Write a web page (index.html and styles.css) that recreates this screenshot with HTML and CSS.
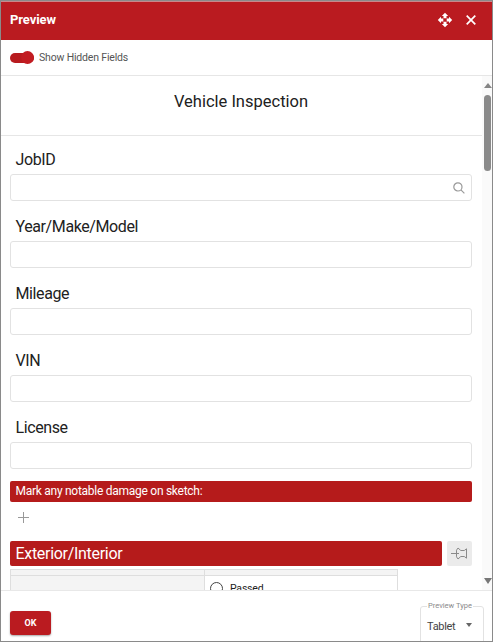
FILE: index.html
```html
<!DOCTYPE html>
<html lang="en">
<head>
    <meta charset="utf-8">
    <title>Preview</title>
    <link rel="stylesheet" href="styles.css">
</head>
<body>
    <div class="dialog">
        <!-- title bar -->
        <div class="dialog-header">
            <h1>Preview</h1>
            <svg class="icon-move" width="16" height="16" viewBox="0 0 16 16">
                <path d="M8 .8 11.200 4H9.500v2.300h-3V4H4.800zM8 15.200 11.200 12H9.500V9.700h-3V12H4.800zM.8 8 4 4.800v1.700h2.300v3H4v1.700zM15.200 8 12 4.800v1.700H9.700v3H12v1.700z"/>
            </svg>
            <svg class="icon-close" width="10" height="10" viewBox="0 0 10 10">
                <path d="M.7.7l8.6 8.6M9.3.7L.7 9.3"/>
            </svg>
        </div>

        <!-- hidden fields switch -->
        <div class="toolbar">
            <span class="switch"></span>
            <span class="switch-label">Show Hidden Fields</span>
        </div>

        <div class="dialog-body">
            <div class="form">
                <div class="form-title">Vehicle Inspection</div>

                <div class="field">
                    <label>JobID</label>
                    <div class="input">
                        <svg class="icon-search" width="12" height="12" viewBox="0 0 12 12">
                            <circle cx="4.9" cy="4.9" r="4.1"/>
                            <path d="M7.9 7.9l3.5 3.5"/>
                        </svg>
                    </div>
                </div>
                <div class="field">
                    <label>Year/Make/Model</label>
                    <div class="input"></div>
                </div>
                <div class="field">
                    <label>Mileage</label>
                    <div class="input"></div>
                </div>
                <div class="field">
                    <label>VIN</label>
                    <div class="input"></div>
                </div>
                <div class="field">
                    <label>License</label>
                    <div class="input"></div>
                </div>

                <div class="banner">Mark any notable damage on sketch:</div>
                <div class="add">
                    <svg width="11" height="11" viewBox="0 0 11 11">
                        <path d="M5.5 0v11M0 5.5h11"/>
                    </svg>
                </div>

                <div class="section">
                    <div class="section-title">Exterior/Interior</div>
                    <div class="pin">
                        <svg width="17" height="13" viewBox="0 0 17 13">
                            <path d="M0 6.500h8M5.500 6.500V3.200L7 1l2.800 2.500h3.500l2.200-1.700v9.400l-2.200-1.700H9.800L7 12 5.500 9.800z"/>
                        </svg>
                    </div>
                </div>

                <div class="grid">
                    <div class="cell head"></div>
                    <div class="cell head"></div>
                    <div class="cell side"></div>
                    <div class="cell option">
                        <span class="radio"></span>
                        <span>Passed</span>
                    </div>
                </div>
            </div>

            <!-- scrollbar -->
            <div class="scrollbar">
                <span class="arrow-up"></span>
                <span class="thumb"></span>
                <span class="arrow-down"></span>
            </div>
        </div>

        <!-- footer -->
        <div class="dialog-footer">
            <div class="btn-ok">OK</div>
            <fieldset class="select">
                <legend>Preview Type</legend>
                <span>Tablet</span>
                <span class="caret"></span>
            </fieldset>
        </div>
    </div>
</body>
</html>
```
FILE: styles.css
```css
* {
    box-sizing: border-box;
    margin: 0;
    padding: 0;
}
body {
    width: 493px;
    height: 642px;
    overflow: hidden;
    background-color: #fff;
    font-family: Roboto, "Liberation Sans", sans-serif;
    color: #212121;
}
.dialog {
    display: flex;
    flex-direction: column;
    width: 493px;
    height: 642px;
    border: 1px solid #8a8a8a;
}

/* title bar */
.dialog-header {
    display: flex;
    align-items: center;
    height: 39px;
    padding: 0 16px 2px 9px;
    border-top: 1px solid #c9888b;
    background-color: #ba1b20;
    color: #fff;
}
.dialog-header h1 {
    flex: 1;
    font-size: 13px;
    letter-spacing: -0.1px;
    line-height: 18px;
}
.icon-move {
    margin-right: 13px;
    fill: #fff;
}
.icon-close {
    fill: none;
    stroke: #fff;
    stroke-width: 1.7;
}

/* hidden fields switch */
.toolbar {
    display: flex;
    align-items: center;
    height: 36px;
    padding-left: 9px;
    border-bottom: 1px solid #e6e6e6;
}
.switch {
    display: flex;
    align-items: center;
    justify-content: flex-end;
    width: 24px;
    height: 10px;
    margin-right: 5px;
    border-radius: 5px;
    background-color: #b81b1f;
}
.switch::after {
    content: "";
    flex: none;
    width: 13px;
    height: 13px;
    border-radius: 50%;
    background-color: #c21c22;
}
.switch-label {
    font-size: 10.5px;
    letter-spacing: -0.17px;
    color: #555;
}

/* scrolling form */
.dialog-body {
    display: flex;
    height: 514px;
    overflow: hidden;
}
.form {
    flex: 1;
}
.form-title {
    height: 60px;
    padding: 14px 1px 0 0;
    border-bottom: 1px solid #e6e6e6;
    font-size: 16.5px;
    line-height: 23px;
    text-align: center;
}
.field {
    height: 67px;
    padding: 13px 10px 0 9px;
}
.field label {
    display: block;
    height: 25px;
    padding-left: 5.5px;
    font-size: 16px;
    letter-spacing: -0.4px;
    line-height: 21px;
}
.input {
    display: flex;
    align-items: center;
    justify-content: flex-end;
    height: 27px;
    padding-right: 6px;
    border: 1px solid #e2e2e2;
    border-radius: 3px;
}
.icon-search {
    fill: none;
    stroke: #999;
    stroke-width: 1.2;
}
.banner {
    height: 21px;
    margin: 10px 10px 0 9px;
    padding-left: 5.5px;
    border-radius: 2px;
    background-color: #b51b1b;
    color: #fff;
    font-size: 12px;
    letter-spacing: -0.27px;
    line-height: 21px;
}
.add {
    height: 39px;
    padding: 10px 0 0 17px;
}
.add svg {
    display: block;
    fill: none;
    stroke: #999;
    stroke-width: 1;
}
.section {
    display: flex;
    gap: 5px;
    height: 25px;
    margin: 0 10px 0 9px;
}
.section-title {
    flex: 1;
    padding-left: 5.5px;
    border-radius: 2px;
    background-color: #b51b1b;
    color: #fff;
    font-size: 16px;
    letter-spacing: -0.3px;
    line-height: 25px;
}
.pin {
    display: flex;
    align-items: center;
    justify-content: center;
    width: 25px;
    border-radius: 2px;
    background-color: #ebebeb;
}
.pin svg {
    fill: none;
    stroke: #8a8a8a;
    stroke-width: 1;
}
.grid {
    display: grid;
    grid-template-columns: 194px 193px;
    grid-template-rows: 6px 40px;
    width: 388px;
    margin: 3px 0 0 9px;
    border-top: 1px solid #dedede;
    border-left: 1px solid #dedede;
}
.cell {
    border-right: 1px solid #dedede;
    border-bottom: 1px solid #dedede;
}
.head,
.side {
    background-color: #f4f4f4;
}
.option {
    display: flex;
    gap: 7px;
    padding: 6px 0 0 5px;
    font-size: 10.5px;
    letter-spacing: -0.2px;
    line-height: 13px;
}
.radio {
    width: 13px;
    height: 13px;
    border: 1px solid #444;
    border-radius: 50%;
}

/* scrollbar */
.scrollbar {
    display: flex;
    flex-direction: column;
    align-items: center;
    width: 10px;
    padding: 7px 0 6px 1px;
    background-color: #fafafa;
}
.arrow-up,
.arrow-down {
    border: 4px solid transparent;
}
.arrow-up {
    border-top: 0;
    border-bottom: 5px solid #858585;
}
.arrow-down {
    margin-top: auto;
    border-bottom: 0;
    border-top: 6px solid #777;
}
.thumb {
    width: 7px;
    height: 76px;
    margin-top: 7px;
    border-radius: 4px;
    background-color: #8a8a8a;
}

/* footer */
.dialog-footer {
    display: flex;
    justify-content: space-between;
    height: 51px;
    padding: 0 8px 0 9px;
    border-top: 1px solid #e8e8e8;
    overflow: hidden;
}
.btn-ok {
    width: 41px;
    height: 24px;
    margin-top: 20px;
    border-radius: 3px;
    background-color: #ba1b20;
    box-shadow: 0 1px 2px rgba(0, 0, 0, 0.35);
    color: #fff;
    font-size: 9px;
    font-weight: bold;
    line-height: 24px;
    text-align: center;
}
.select {
    width: 64px;
    height: 50px;
    margin-top: 10px;
    padding: 0 10px 0 6px;
    border: 1px solid #e2e2e2;
    border-radius: 3px;
    font-size: 11px;
    letter-spacing: -0.3px;
    line-height: 32px;
    color: #444;
    white-space: nowrap;
}
.select legend {
    padding: 0 1px;
    font-size: 7.5px;
    letter-spacing: 0;
    line-height: 10px;
    color: #8a8a8a;
}
.caret {
    display: inline-block;
    margin-left: 8px;
    border: 3.5px solid transparent;
    border-top: 4px solid #666;
    border-bottom: 0;
    vertical-align: 3px;
}
```
